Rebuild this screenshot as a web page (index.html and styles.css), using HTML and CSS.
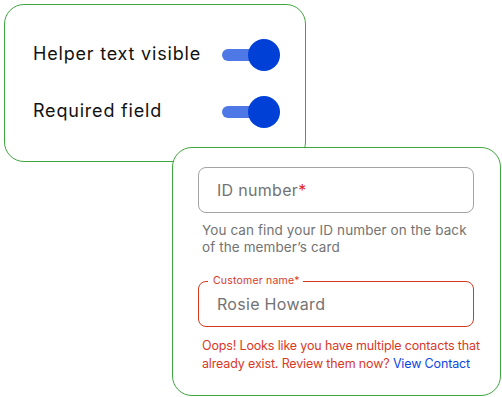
FILE: index.html
```html
<!DOCTYPE html>
<html>
<head>
<meta charset="utf-8">
<link rel="stylesheet" href="styles.css">
</head>
<body>
<div class="stage">
  <div class="card settings">
    <div class="row">
      <span class="row-label">Helper text visible</span>
      <span class="toggle"><span class="track"></span><span class="knob"></span></span>
    </div>
    <div class="row">
      <span class="row-label">Required field</span>
      <span class="toggle"><span class="track"></span><span class="knob"></span></span>
    </div>
  </div>
  <div class="card form">
    <div class="field">
      <span class="placeholder">ID number<span class="req">*</span></span>
    </div>
    <p class="helper">You can find your ID number on the back of the member’s card</p>
    <div class="field error">
      <span class="float-label">Customer name*</span>
      <span class="value">Rosie Howard</span>
    </div>
    <p class="helper err">Oops! Looks like you have multiple contacts that<br>already exist. Review them now? <a class="link" href="#">View Contact</a></p>
  </div>
</div>
</body>
</html>
```

FILE: styles.css
```css
html, body {
  margin: 0;
  padding: 0;
  background: #ffffff;
}
body {
  font-family: Inter, "Noto Sans", sans-serif;
}
.stage {
  width: 502px;
  height: 397px;
  overflow: hidden;
}
.card {
  box-sizing: border-box;
  border: 1px solid #3fa63f;
  border-radius: 20px;
  background: #ffffff;
}
.settings {
  margin: 4px 0 0 4px;
  width: 302px;
  height: 158px;
  padding: 34px 0 0 28px;
  display: flex;
  flex-direction: column;
  gap: 25px;
}
.row {
  display: flex;
  align-items: center;
  height: 32px;
}
.row-label {
  width: 189px;
  font-size: 18px;
  line-height: 24px;
  letter-spacing: 0.8px;
  margin-top: -3px;
  color: #111111;
}
.toggle {
  position: relative;
  width: 58px;
  height: 32px;
  display: block;
}
.track {
  position: absolute;
  left: 0;
  top: 10px;
  width: 44px;
  height: 12px;
  border-radius: 6px;
  background: #4d78e6;
}
.knob {
  position: absolute;
  right: 0;
  top: 0;
  width: 32px;
  height: 32px;
  border-radius: 50%;
  background: #0040d6;
}
.form {
  margin: -15px 0 0 172px;
  width: 329px;
  height: 249px;
  padding: 19px 0 0 25px;
}
.field {
  position: relative;
  box-sizing: border-box;
  width: 276px;
  height: 46px;
  border: 1px solid #a3a3a3;
  border-radius: 8px;
  display: flex;
  align-items: center;
  padding-left: 18px;
  font-size: 16px;
  letter-spacing: 0.3px;
  color: #737373;
}
.req {
  color: #e0241b;
}
.field.error {
  border-color: #d8391f;
  margin-top: 25px;
}
.float-label {
  position: absolute;
  left: 9px;
  top: -8px;
  padding: 0 3px 0 5px;
  background: #ffffff;
  font-size: 10.5px;
  line-height: 14px;
  letter-spacing: 0.2px;
  color: #d8391f;
}
.helper {
  margin: 9px 0 0 4px;
  width: 280px;
  font-size: 13.5px;
  line-height: 17px;
  letter-spacing: 0.1px;
  color: #737373;
}
.helper.err {
  width: 290px;
  white-space: nowrap;
  font-size: 12.5px;
  line-height: 18px;
  letter-spacing: -0.15px;
  color: #d8391f;
  margin-top: 10px;
}
.link {
  color: #0b47e0;
  text-decoration: none;
}
```
